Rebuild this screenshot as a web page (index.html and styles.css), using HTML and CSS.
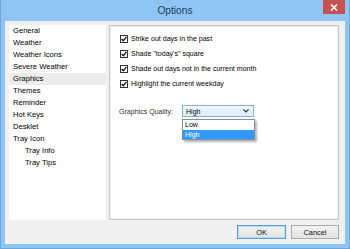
FILE: index.html
```html
<!DOCTYPE html>
<html lang="en">
<head>
    <meta charset="UTF-8">
    <title>Options</title>
    <link rel="stylesheet" href="styles.css">
</head>
<body>
    <div class="window">
        <div class="titlebar">
            <span></span>
            <div class="title">Options</div>
            <div class="close">
                <svg width="8" height="7" viewBox="0 0 8 7"><path d="M1 0.5 L7 6.5 M7 0.5 L1 6.5" stroke="#fff" stroke-width="1.6"/></svg>
            </div>
        </div>

        <div class="client">
            <div class="main">
                <ul class="sidebar">
                    <li>General</li>
                    <li>Weather</li>
                    <li>Weather Icons</li>
                    <li>Severe Weather</li>
                    <li class="active">Graphics</li>
                    <li>Themes</li>
                    <li>Reminder</li>
                    <li>Hot Keys</li>
                    <li>Desklet</li>
                    <li>Tray Icon</li>
                    <li class="sub">Tray Info</li>
                    <li class="sub">Tray Tips</li>
                </ul>

                <div class="panel">
                    <div class="check-row"><span class="checkbox"><svg width="6" height="6" viewBox="0 0 6 6"><path d="M0.6 3 L2.3 4.8 L5.4 0.8" fill="none" stroke="#111" stroke-width="1.3"/></svg></span>Strike out days in the past</div>
                    <div class="check-row"><span class="checkbox"><svg width="6" height="6" viewBox="0 0 6 6"><path d="M0.6 3 L2.3 4.8 L5.4 0.8" fill="none" stroke="#111" stroke-width="1.3"/></svg></span>Shade "today's" square</div>
                    <div class="check-row"><span class="checkbox"><svg width="6" height="6" viewBox="0 0 6 6"><path d="M0.6 3 L2.3 4.8 L5.4 0.8" fill="none" stroke="#111" stroke-width="1.3"/></svg></span>Shade out days not in the current month</div>
                    <div class="check-row"><span class="checkbox"><svg width="6" height="6" viewBox="0 0 6 6"><path d="M0.6 3 L2.3 4.8 L5.4 0.8" fill="none" stroke="#111" stroke-width="1.3"/></svg></span>Highlight the current weekday</div>

                    <div class="quality">
                        <span class="quality-label">Graphics Quality:</span>
                        <div class="select-wrap">
                            <div class="select">
                                <span>High</span>
                                <svg width="6" height="4" viewBox="0 0 6 4"><path d="M0.5 0.5 L3 3 L5.5 0.5" fill="none" stroke="#333" stroke-width="1.1"/></svg>
                            </div>
                            <div class="dropdown">
                                <div class="option">Low</div>
                                <div class="option selected">High</div>
                            </div>
                        </div>
                    </div>
                </div>
            </div>

            <div class="footer">
                <button class="default">OK</button>
                <button>Cancel</button>
            </div>
        </div>
    </div>
</body>
</html>
```

FILE: styles.css
```css
html, body {
    margin: 0;
    padding: 0;
}

body {
    font-family: 'Liberation Sans', Arial, sans-serif;
    color: #000;
    overflow: hidden;
}

.window {
    width: 350px;
    height: 249px;
    box-sizing: border-box;
    background-color: #8ec5f4;
    border: 1px solid #6fa6dc;
    border-top-color: #8ec5f4;
    padding: 0 4px 4px;
    display: flex;
    flex-direction: column;
}

.titlebar {
    height: 20px;
    display: grid;
    grid-template-columns: 22px 1fr 22px;
    align-items: start;
}

.title {
    text-align: center;
    font-size: 10.2px;
    line-height: 19px;
    color: #1f3a58;
}

.close {
    height: 14px;
    margin-top: -1px;
    background-color: #c75050;
    display: flex;
    align-items: center;
    justify-content: center;
}

.client {
    flex: 1;
    background-color: #f0f0f0;
    padding: 4px 6px 5px 4px;
    display: flex;
    flex-direction: column;
    gap: 5px;
}

.main {
    flex: 1;
    display: flex;
    gap: 3px;
}

.sidebar {
    width: 97px;
    margin: 0;
    padding: 0;
    list-style: none;
    background-color: #fff;
    font-size: 7.6px;
}

.sidebar li {
    height: 12px;
    line-height: 12px;
    padding-left: 4px;
    color: #000;
}

.sidebar li.active {
    background-color: #ebebeb;
}

.sidebar li.sub {
    padding-left: 16px;
}

.panel {
    flex: 1;
    background-color: #fff;
    border: 1px solid #c9c9c9;
    box-shadow: inset 0 0 0 1px #ececec;
    padding: 5px 9px;
    font-size: 7.05px;
}

.check-row {
    height: 15px;
    display: flex;
    align-items: center;
    gap: 3px;
}

.checkbox {
    width: 8px;
    height: 8px;
    box-sizing: border-box;
    margin-left: 1px;
    border: 1px solid #333;
    background-color: #fff;
    display: flex;
    align-items: center;
    justify-content: center;
}

.quality {
    margin-top: 14px;
    height: 12px;
    display: flex;
    align-items: center;
}

.quality-label {
    width: 63px;
    color: #333;
}

.select-wrap {
    position: relative;
}

.select {
    width: 72px;
    height: 12px;
    box-sizing: border-box;
    border: 1px solid #7eb4ea;
    background: linear-gradient(#eef5fc, #dfedfb);
    display: flex;
    align-items: center;
    justify-content: space-between;
    padding: 0 4px 0 3px;
}

.dropdown {
    position: absolute;
    top: 14px;
    left: 0;
    width: 73px;
    box-sizing: border-box;
    border: 1px solid #7a8ea6;
    background-color: #fff;
    box-shadow: 2px 2px 2px rgba(0, 0, 0, 0.3);
    z-index: 2;
}

.option {
    height: 9.5px;
    line-height: 9.5px;
    padding-left: 2px;
}

.option.selected {
    background-color: #3399ff;
    color: #fff;
}

.footer {
    height: 14px;
    display: flex;
    justify-content: flex-end;
    gap: 5px;
}

.footer button {
    width: 48px;
    height: 14px;
    margin: 0;
    padding: 0;
    box-sizing: border-box;
    border: 1px solid #acacac;
    background: linear-gradient(#f2f2f2, #e3e3e3);
    font-family: 'Liberation Sans', Arial, sans-serif;
    font-size: 7.4px;
    color: #111;
}

.footer button.default {
    width: 49px;
    border-color: #569de5;
    box-shadow: inset 0 0 0 1px #b9d9f7;
}
```
